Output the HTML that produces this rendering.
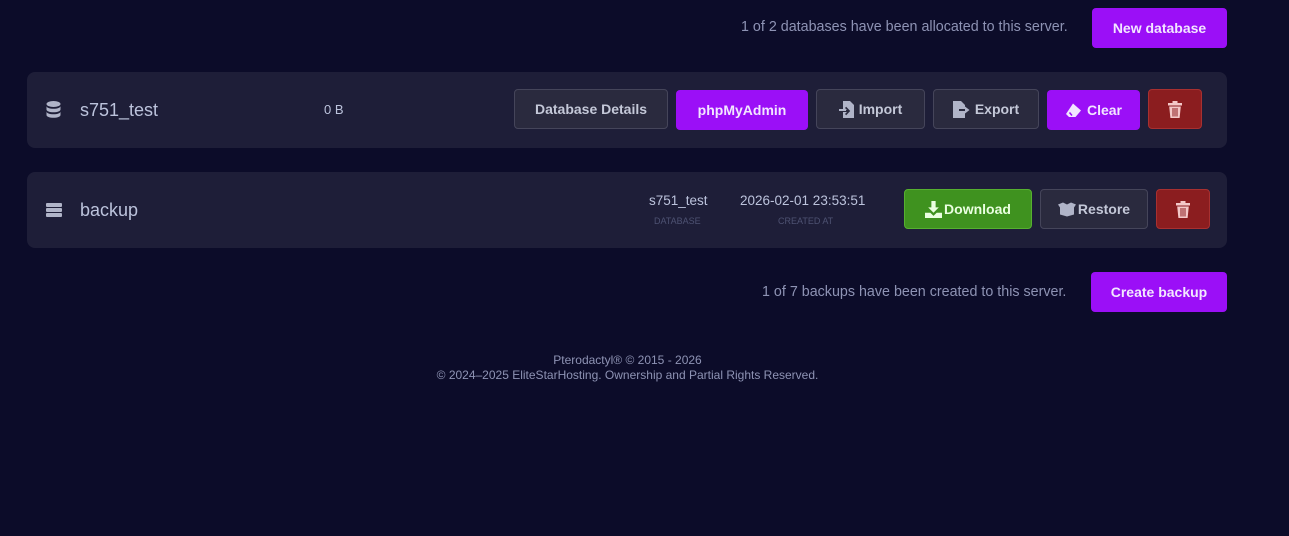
<!DOCTYPE html>
<html><head><meta charset="utf-8"><style>
*{box-sizing:border-box;margin:0;padding:0}
body{width:1289px;height:536px;background:#0c0c29;font-family:"Liberation Sans",sans-serif;position:relative;overflow:hidden;color:#cbd0e0}
.abs{position:absolute}
.btn{position:absolute;height:40px;border-radius:4px;display:flex;align-items:center;justify-content:center;font-size:14px;font-weight:bold;gap:5px}
.btn svg{flex-shrink:0}
.gray{background:#2a2a3e;border:1px solid #45455a;color:#c4c8d8}
.purple{background:#9b0ff7;color:#f2e6ff}
.red{background:#8b1d1f;border:1px solid #a83030;color:#f3c8c8}
.green{background:#3f921f;border:1px solid #56b030;color:#eaffe0}
.card{position:absolute;left:27px;width:1200px;height:76px;background:#1e1e38;border-radius:8px}
.small{font-size:14.3px;color:#8e93b4}
</style></head><body>
<div class="abs small" style="left:741px;top:19px">1 of 2 databases have been allocated to this server.</div>
<div class="btn purple" style="left:1092px;top:8px;width:135px">New database</div>

<div class="card" style="top:72px"></div>
<svg class="abs" style="left:46px;top:101px" width="15" height="17" viewBox="0 0 15 17"><g fill="#b0b4c8"><ellipse cx="7.5" cy="3" rx="7" ry="3"/><path d="M0.5 5v3.5c0 1.6 3.1 2.8 7 2.8s7-1.2 7-2.8V5c0 1.6-3.1 2.8-7 2.8s-7-1.2-7-2.8z"/><path d="M0.5 10.5v3.5c0 1.6 3.1 2.8 7 2.8s7-1.2 7-2.8v-3.5c0 1.6-3.1 2.8-7 2.8s-7-1.2-7-2.8z"/></g></svg>
<div class="abs" style="left:80px;top:100px;font-size:18px;color:#bcc3dc">s751_test</div>
<div class="abs" style="left:324px;top:102px;font-size:13px;color:#bcc3dc">0 B</div>
<div class="btn gray" style="left:514px;top:89px;width:154px">Database Details</div>
<div class="btn purple" style="left:676px;top:90px;width:132px">phpMyAdmin</div>
<div class="btn gray" style="left:816px;top:89px;width:109px"><svg width="15" height="17" viewBox="0 0 15 17"><path d="M4 0h7l4 4v13H4v-6h4l-2 2 1.2 1.2 4-4.2-4-4.2L6 7l2 2H4z" fill="#b0b4c8"/><path d="M0 8h7v2H0z" fill="#b0b4c8"/></svg>Import</div>
<div class="btn gray" style="left:933px;top:89px;width:106px"><svg width="17" height="17" viewBox="0 0 17 17"><path d="M0 0h8l4 4v4H6v2h6v7H0z" fill="#b0b4c8"/><path d="M12 5.5l4.5 3.5-4.5 3.5z" fill="#b0b4c8"/></svg>Export</div>
<div class="btn purple" style="left:1047px;top:90px;width:93px"><svg width="17" height="15" viewBox="0 0 17 15"><path d="M8 0.5l8 7-5.5 6.5H4L1 11z" fill="#f2e6ff"/><path d="M4.5 9.5l2.5 3" stroke="#9b0ff7" stroke-width="1.5"/></svg>Clear</div>
<div class="btn red" style="left:1148px;top:89px;width:54px"><svg width="14" height="17" viewBox="0 0 14 17"><path d="M0 2h14v2.5H0zM4.5 0h5v2h-5zM1.2 5.5h11.6L11.6 17H2.4z" fill="#f3c8c8"/><path d="M5 7v8.5M7 7v8.5M9 7v8.5" stroke="#8b1d1f" stroke-width="1"/></svg></div>

<div class="card" style="top:172px"></div>
<svg class="abs" style="left:46px;top:203px" width="16" height="14" viewBox="0 0 16 14"><g fill="#b0b4c8"><rect y="0" width="16" height="4" rx="1"/><rect y="5" width="16" height="4" rx="1"/><rect y="10" width="16" height="4" rx="1"/></g></svg>
<div class="abs" style="left:80px;top:200px;font-size:18px;color:#bcc3dc">backup</div>
<div class="abs" style="left:649px;top:193px;font-size:13.5px;color:#bcc3dc">s751_test</div>
<div class="abs" style="left:654px;top:216px;font-size:9px;color:#4e5272">DATABASE</div>
<div class="abs" style="left:740px;top:193px;font-size:13.5px;color:#bcc3dc">2026-02-01 23:53:51</div>
<div class="abs" style="left:778px;top:216px;font-size:9px;color:#4e5272">CREATED AT</div>
<div class="btn green" style="left:904px;top:189px;width:128px;gap:2px"><svg width="17" height="17" viewBox="0 0 16 16"><path d="M6 0h4v6h3l-5 5-5-5h3z M0 11h5l3 3 3-3h5v5H0z" fill="#eaffe0"/></svg>Download</div>
<div class="btn gray" style="left:1040px;top:189px;width:108px;gap:2px"><svg width="18" height="15" viewBox="0 0 18 14"><path d="M0 2l5-2 4 2 4-2 5 2-2 3v7l-7 2-7-2V5z" fill="#b0b4c8"/></svg>Restore</div>
<div class="btn red" style="left:1156px;top:189px;width:54px"><svg width="14" height="17" viewBox="0 0 14 17"><path d="M0 2h14v2.5H0zM4.5 0h5v2h-5zM1.2 5.5h11.6L11.6 17H2.4z" fill="#f3c8c8"/><path d="M5 7v8.5M7 7v8.5M9 7v8.5" stroke="#8b1d1f" stroke-width="1"/></svg></div>

<div class="abs small" style="left:762px;top:284px">1 of 7 backups have been created to this server.</div>
<div class="btn purple" style="left:1091px;top:272px;width:136px">Create backup</div>

<div class="abs" style="left:0;width:1255px;top:353px;text-align:center;font-size:12px;color:#8e93b4;line-height:15px">Pterodactyl® © 2015 - 2026<br>© 2024–2025 EliteStarHosting. Ownership and Partial Rights Reserved.</div>
</body></html>
